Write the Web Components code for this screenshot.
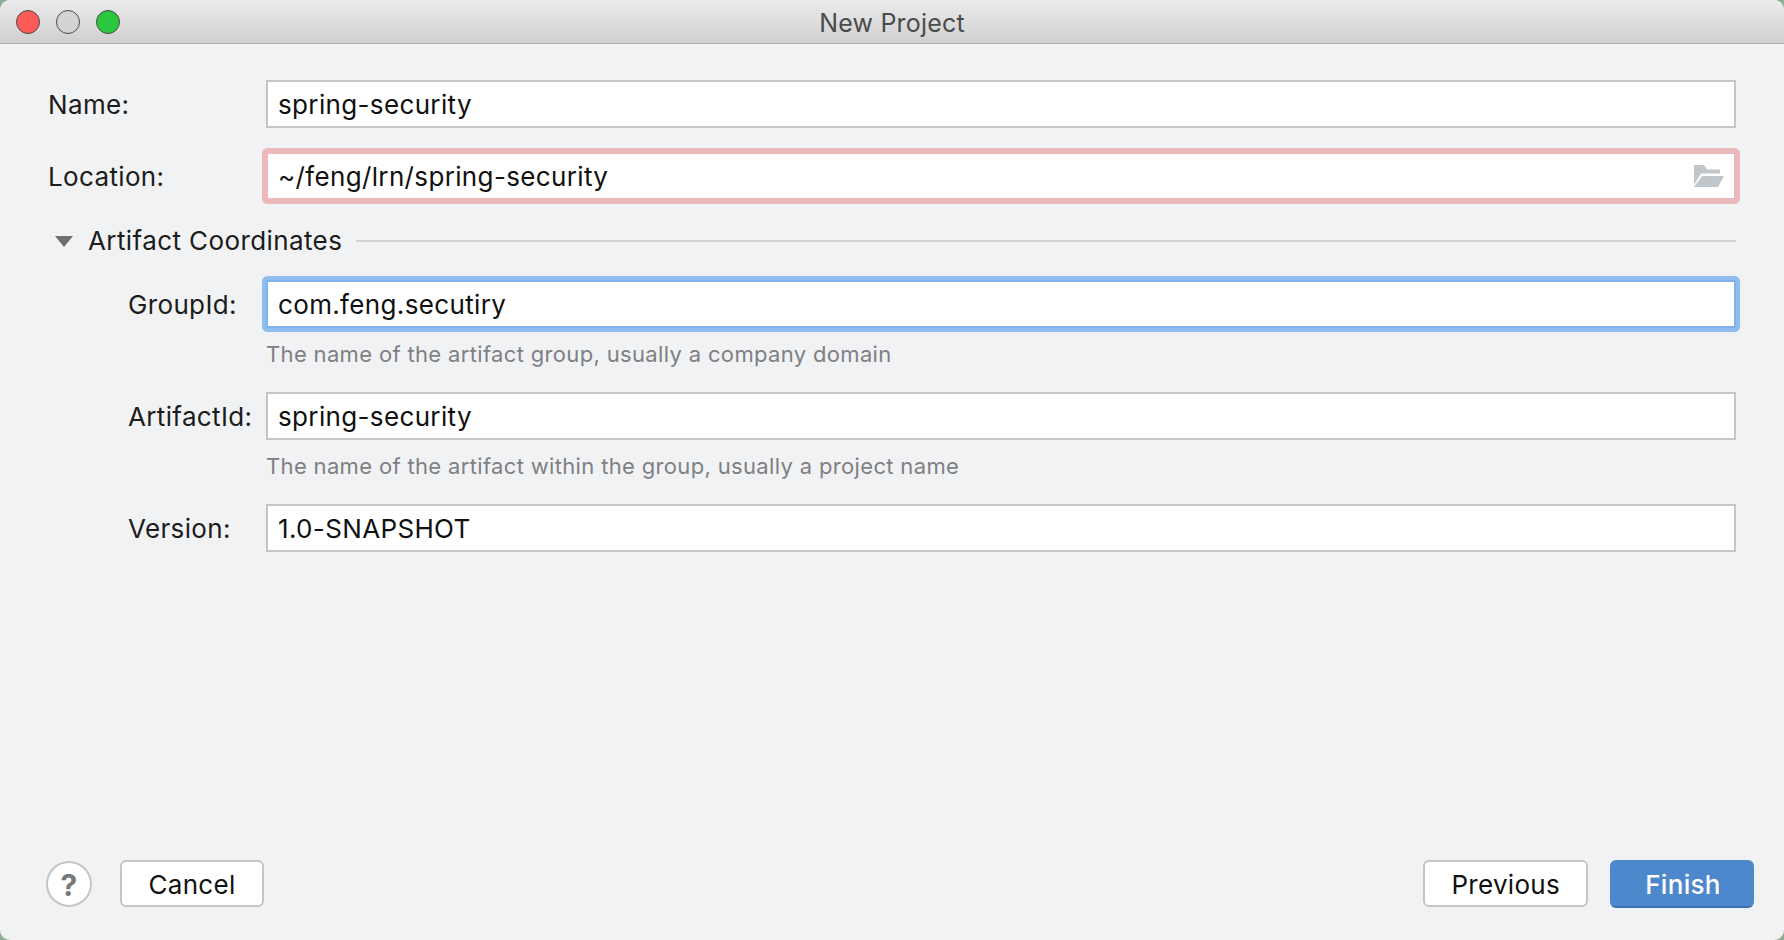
<!DOCTYPE html>
<html lang="en">
<head>
<meta charset="utf-8">
<title>New Project</title>
<style>
  html, body { margin: 0; height: 100%; background: #8fae96; }
  body { font-family: Inter, "Liberation Sans", sans-serif; }
</style>
</head>
<body>
<new-project-dialog>
  <form-row label="Name:">
    <text-field value="spring-security"></text-field>
  </form-row>
  <form-row label="Location:">
    <text-field value="~/feng/lrn/spring-security" state="error" browse></text-field>
  </form-row>
  <section-header title="Artifact Coordinates">
    <form-row label="GroupId:" nested hint="The name of the artifact group, usually a company domain">
      <text-field value="com.feng.secutiry" state="focus"></text-field>
    </form-row>
    <form-row label="ArtifactId:" nested hint="The name of the artifact within the group, usually a project name">
      <text-field value="spring-security"></text-field>
    </form-row>
    <form-row label="Version:" nested>
      <text-field value="1.0-SNAPSHOT"></text-field>
    </form-row>
  </section-header>
  <div slot="footer-left">
    <help-button></help-button>
    <dialog-button>Cancel</dialog-button>
  </div>
  <div slot="footer-right">
    <dialog-button>Previous</dialog-button>
    <dialog-button primary>Finish</dialog-button>
  </div>
</new-project-dialog>

<script>
// Window chrome: title bar, form area and the button row at the bottom
class NewProjectDialog extends HTMLElement {
  constructor() {
    super();
    this.attachShadow({ mode: 'open' }).innerHTML = `
      <style>
        :host {
          display: flex;
          flex-direction: column;
          width: 1784px;
          height: 940px;
          box-sizing: border-box;
          background: #f1f2f4;
          border-radius: 10px;
          overflow: hidden;
        }
        .form {
          display: flex;
          flex-direction: column;
          gap: 24px;
          padding: 36px 48px 0 48px;
        }
        .footer {
          display: flex;
          justify-content: space-between;
          margin-top: auto;
          padding: 0 30px 32px 46px;
        }
        ::slotted(div) {
          display: flex;
          align-items: flex-start;
        }
        ::slotted([slot="footer-left"]) { gap: 28px; }
        ::slotted([slot="footer-right"]) { gap: 22px; }
      </style>
      <title-bar>New Project</title-bar>
      <div class="form"><slot></slot></div>
      <div class="footer">
        <slot name="footer-left"></slot>
        <slot name="footer-right"></slot>
      </div>
    `;
  }
}

class TitleBar extends HTMLElement {
  constructor() {
    super();
    this.attachShadow({ mode: 'open' }).innerHTML = `
      <style>
        :host {
          display: flex;
          align-items: center;
          justify-content: center;
          position: relative;
          flex: none;
          height: 43px;
          box-sizing: content-box;
          background: linear-gradient(#ebebeb, #d0d0d0);
          border-bottom: 1px solid #acacac;
          color: #4b4b4b;
          font-size: 25px;
          letter-spacing: 0.2px;
        }
        .text { position: relative; top: 1px; }
        .lights {
          position: absolute;
          left: 16px;
          top: 10px;
          display: flex;
          gap: 16px;
        }
        .lights i {
          width: 24px;
          height: 24px;
          box-sizing: border-box;
          border-radius: 50%;
          border: 1px solid;
        }
        .close { background: #fc5b57; border-color: #ee534e; }
        .idle { background: #d3d3d3; border-color: #c6c6c6; }
        .zoom { background: #2ac73f; border-color: #27b83a; }
      </style>
      <div class="lights"><i class="close"></i><i class="idle"></i><i class="zoom"></i></div>
      <span class="text"><slot></slot></span>
    `;
  }
}

class FormRow extends HTMLElement {
  constructor() {
    super();
    const hint = this.getAttribute('hint');
    this.attachShadow({ mode: 'open' }).innerHTML = `
      <style>
        :host {
          display: grid;
          grid-template-columns: 218px 1fr;
          align-items: center;
          row-gap: 12px;
          color: #1c1c1c;
          font-size: 26px;
          letter-spacing: 0.35px;
        }
        :host([nested]) { grid-template-columns: 138px 1fr; }
        .hint {
          grid-column: 2;
          height: 28px;
          line-height: 28px;
          color: #7f8083;
          font-size: 22px;
          letter-spacing: 0.34px;
        }
      </style>
      <label>${this.getAttribute('label')}</label>
      <slot></slot>
      ${hint ? `<div class="hint">${hint}</div>` : ''}
    `;
  }
}

class TextField extends HTMLElement {
  constructor() {
    super();
    const browse = this.hasAttribute('browse');
    this.attachShadow({ mode: 'open' }).innerHTML = `
      <style>
        :host {
          display: flex;
          align-items: center;
          justify-content: space-between;
          height: 48px;
          box-sizing: border-box;
          padding: 0 10px 0 10px;
          background: #fff;
          border: 2px solid #c5c5c5;
          color: #111;
          font-size: 26px;
          letter-spacing: 0.35px;
        }
        :host([state="error"]) {
          border-color: #ebb9bb;
          border-radius: 2px;
          box-shadow: 0 0 0 4px #ebb9bb;
        }
        :host([state="focus"]) {
          border-color: #7fb2ea;
          border-radius: 2px;
          box-shadow: 0 0 0 4px #8fbdf0;
        }
        svg { display: block; }
      </style>
      <span>${this.getAttribute('value')}</span>
      ${browse ? `
        <svg width="30" height="22" viewBox="0 0 30 22">
          <path fill="#c0c6ca" d="M0 0h10l3 4.5h13v4H7L0 20z"/>
          <path fill="#c0c6ca" d="M8 11h22l-6 11H0z"/>
        </svg>` : ''}
    `;
  }
}

class SectionHeader extends HTMLElement {
  constructor() {
    super();
    this.attachShadow({ mode: 'open' }).innerHTML = `
      <style>
        :host {
          display: flex;
          flex-direction: column;
          gap: 24px;
          margin-top: -3px;
        }
        .head {
          display: flex;
          align-items: center;
          height: 40px;
          margin-bottom: -5px;
          color: #1c1c1c;
          font-size: 26px;
          letter-spacing: 0.4px;
        }
        .head span { margin-bottom: 2px; }
        .head svg { margin: 0 15px 0 7px; }
        .head hr {
          flex: 1;
          height: 2px;
          margin: 0 0 0 14px;
          border: 0;
          background: #d2d3d5;
        }
        .body {
          display: flex;
          flex-direction: column;
          gap: 24px;
          padding-left: 80px;
        }
      </style>
      <div class="head">
        <svg width="18" height="11" viewBox="0 0 18 11"><path fill="#6e6e6e" d="M0 0h18L9 11z"/></svg>
        <span>${this.getAttribute('title')}</span>
        <hr>
      </div>
      <div class="body"><slot></slot></div>
    `;
  }
}

class DialogButton extends HTMLElement {
  constructor() {
    super();
    this.attachShadow({ mode: 'open' }).innerHTML = `
      <style>
        :host {
          display: flex;
          align-items: center;
          justify-content: center;
          min-width: 144px;
          height: 47px;
          box-sizing: border-box;
          padding: 2px 26px 0;
          background: #fff;
          border: 2px solid #c5c5c5;
          border-radius: 6px;
          color: #111;
          font-size: 26px;
          letter-spacing: 0.3px;
        }
        :host([primary]) {
          height: 48px;
          padding: 1px 25px 0 27px;
          background: #4c88cb;
          border-color: #4c88cb;
          border-bottom-color: #3b70b1;
          color: #fff;
          font-weight: 500;
        }
      </style>
      <slot></slot>
    `;
  }
}

class HelpButton extends HTMLElement {
  constructor() {
    super();
    this.attachShadow({ mode: 'open' }).innerHTML = `
      <style>
        :host {
          display: flex;
          align-items: center;
          justify-content: center;
          width: 46px;
          height: 46px;
          margin-top: 1px;
          padding-top: 1px;
          box-sizing: border-box;
          background: #fff;
          border: 2px solid #c5c5c5;
          border-radius: 50%;
          color: #77787a;
          font-size: 30px;
          font-weight: 700;
        }
      </style>
      ?
    `;
  }
}

customElements.define('title-bar', TitleBar);
customElements.define('form-row', FormRow);
customElements.define('text-field', TextField);
customElements.define('section-header', SectionHeader);
customElements.define('dialog-button', DialogButton);
customElements.define('help-button', HelpButton);
customElements.define('new-project-dialog', NewProjectDialog);
</script>
</body>
</html>
